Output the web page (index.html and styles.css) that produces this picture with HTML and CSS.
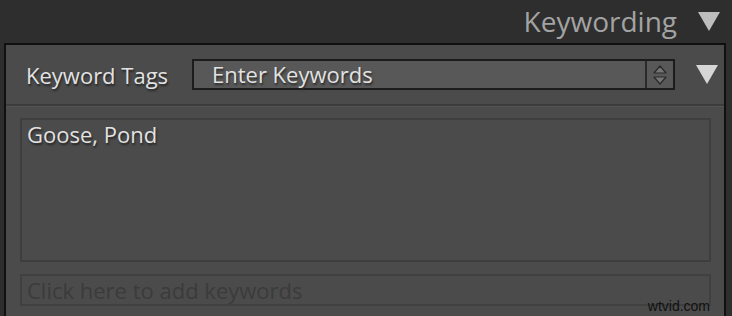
FILE: index.html
```html
<!DOCTYPE html>
<html lang="en">
<head>
    <meta charset="UTF-8">
    <title>Keywording</title>
    <link rel="stylesheet" href="styles.css">
</head>
<body>
    <div class="header">
        <span class="header-title">Keywording</span>
        <span class="tri"></span>
    </div>

    <div class="panel">
        <div class="tags-row">
            <div class="tags-label">Keyword Tags</div>
            <div class="tags-select">
                <div class="tags-value">Enter Keywords</div>
                <div class="stepper">
                    <svg width="16" height="24" viewBox="0 0 16 24">
                        <path d="M8 3 L14 10 L2 10 Z" fill="#757575" stroke="#2a2a2a" stroke-width="1.2" stroke-linejoin="round"/>
                        <path d="M8 21 L14 14 L2 14 Z" fill="#757575" stroke="#2a2a2a" stroke-width="1.2" stroke-linejoin="round"/>
                    </svg>
                </div>
            </div>
            <span class="tri"></span>
        </div>
        <div class="divider"></div>
        <div class="keywords-box">Goose, Pond</div>
        <div class="add-box">Click here to add keywords</div>
        <div class="watermark">wtvid.com</div>
    </div>
</body>
</html>
```

FILE: styles.css
```css
body {
    margin: 0;
    background-color: #2e2e2e;
    font-family: 'Open Sans', 'Liberation Sans', sans-serif;
    width: 732px;
    height: 316px;
    overflow: hidden;
}

.header {
    height: 43px;
    display: flex;
    justify-content: flex-end;
    align-items: center;
    padding-right: 12px;
}

.header-title {
    color: #a3a3a3;
    font-size: 28px;
    margin-right: 21px;
    margin-top: -2px;
}

.tri {
    width: 0;
    height: 0;
    border-left: 11px solid transparent;
    border-right: 11px solid transparent;
    border-top: 19px solid #d6d6d6;
}

.header .tri {
    border-top-color: #bdbdbd;
}

.panel {
    position: relative;
    margin-left: 4px;
    width: 718px;
    height: 271px;
    background-color: #4b4b4b;
    border: 2px solid #101010;
    border-bottom: none;
}

.tags-row {
    display: flex;
    align-items: center;
    height: 59px;
    padding-left: 20px;
}

.tags-label {
    color: #e2e2e2;
    font-size: 22px;
    width: 166px;
    text-shadow: 1px 2px 2px #252525;
}

.tags-select {
    display: flex;
    width: 479px;
    height: 27px;
    border: 2px solid #1c1c1c;
    background-color: #585858;
    margin-right: 21px;
}

.tags-value {
    flex: 1;
    color: #e2e2e2;
    font-size: 22px;
    line-height: 27px;
    padding-left: 18px;
    text-shadow: 1px 2px 2px #2a2a2a;
}

.stepper {
    width: 26px;
    border-left: 2px solid #2a2a2a;
    display: flex;
    align-items: center;
    justify-content: center;
}

.divider {
    height: 2px;
    background-color: #3c3c3c;
    border-bottom: 1px solid #555;
}

.keywords-box {
    margin: 11px 13px 0 14px;
    height: 140px;
    border: 2px solid #3e3e3e;
    color: #e2e2e2;
    font-size: 22px;
    padding: 0 5px;
    line-height: 28px;
    text-shadow: 1px 2px 2px #252525;
}

.add-box {
    margin: 12px 13px 0 14px;
    height: 28px;
    border: 2px solid #404040;
    color: #3b3b3b;
    font-size: 22px;
    line-height: 29px;
    padding: 0 5px;
}

.watermark {
    position: absolute;
    right: 14px;
    bottom: 2px;
    color: #111;
    font-family: 'Liberation Sans', sans-serif;
    font-size: 14px;
}
```
